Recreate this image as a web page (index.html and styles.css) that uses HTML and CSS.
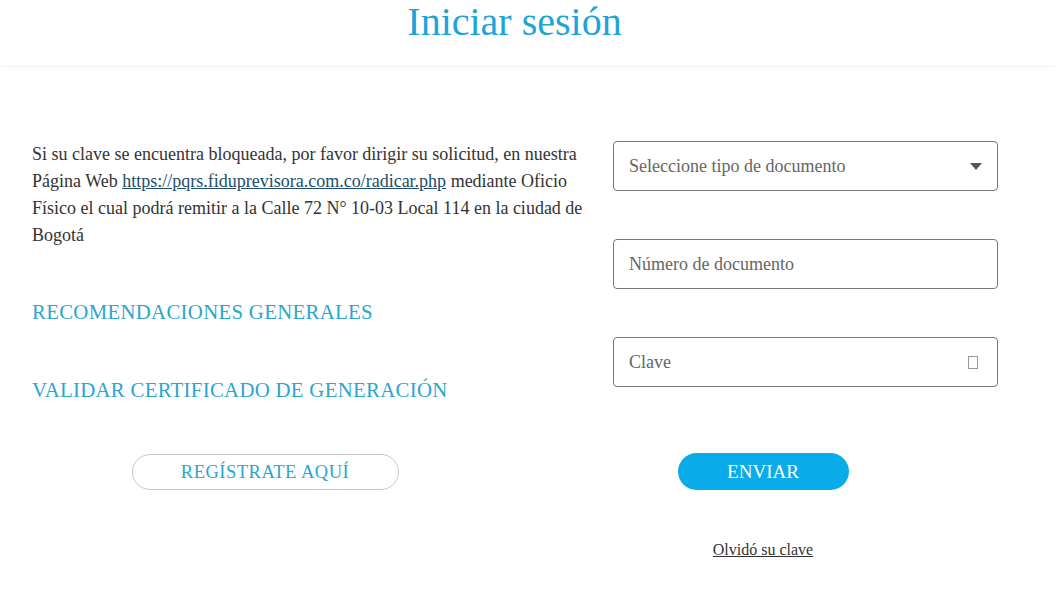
FILE: index.html
```html
<!DOCTYPE html>
<html lang="es">
<head>
<meta charset="utf-8">
<title>Iniciar sesión</title>
<link rel="stylesheet" href="styles.css">
</head>
<body>
<header class="header">
  <h1 class="title">Iniciar sesión</h1>
</header>
<main class="main">
  <section class="info">
    <p class="notice">Si su clave se encuentra bloqueada, por favor dirigir su solicitud, en nuestra Página Web <a class="link" href="#">https://pqrs.fiduprevisora.com.co/radicar.php</a> mediante Oficio Físico el cual podrá remitir a la Calle 72 N° 10-03 Local 114 en la ciudad de Bogotá</p>
    <a class="section-link first" href="#">RECOMENDACIONES GENERALES</a>
    <a class="section-link" href="#">VALIDAR CERTIFICADO DE GENERACIÓN</a>
  </section>
  <form class="form">
    <div class="field select">
      <span class="placeholder">Seleccione tipo de documento</span>
      <span class="caret"></span>
    </div>
    <div class="field">
      <span class="placeholder">Número de documento</span>
    </div>
    <div class="field">
      <span class="placeholder">Clave</span>
      <span class="tofu"></span>
    </div>
  </form>
</main>
<div class="actions">
  <div class="action-col">
    <button class="btn-outline" type="button">REGÍSTRATE AQUÍ</button>
  </div>
  <div class="action-col">
    <button class="btn-primary" type="button">ENVIAR</button>
    <a class="forgot" href="#">Olvidó su clave</a>
  </div>
</div>
</body>
</html>
```
FILE: styles.css
```css
* { box-sizing: border-box; }
html, body { margin: 0; padding: 0; background: #fff; }
body {
  font-family: "Liberation Serif", "Times New Roman", serif;
  color: #333;
  width: 1056px;
  height: 603px;
  overflow: hidden;
}
.header {
  height: 66px;
  box-shadow: 0 2px 4px rgba(0,0,0,0.03);
  border-bottom: 1px solid #f7f7f7;
  display: flex;
  justify-content: center;
  padding-right: 27px;
}
.title {
  margin: 0;
  font-weight: normal;
  font-size: 40px;
  line-height: 44px;
  color: #1ea4d8;
}
.main {
  display: grid;
  grid-template-columns: 557px 385px;
  column-gap: 24px;
  padding: 75px 0 0 32px;
}
.info { display: flex; flex-direction: column; align-items: flex-start; }
.notice {
  margin: 0;
  font-size: 18px;
  line-height: 27px;
  color: #333;
}
.link { color: #1b4e6b; }
.section-link {
  color: #2aa6cf;
  text-decoration: none;
  font-size: 20.8px;
  line-height: 24px;
  letter-spacing: 0.3px;
  margin-top: 54px;
}
.section-link.first { margin-top: 51px; }
.form { display: flex; flex-direction: column; gap: 48px; }
.field {
  height: 50px;
  border: 1px solid #777;
  border-radius: 4px;
  display: flex;
  align-items: center;
  justify-content: space-between;
  padding: 0 15px 0 15px;
}
.placeholder { font-size: 18px; color: #666; }
.caret {
  width: 0; height: 0;
  border-left: 6px solid transparent;
  border-right: 6px solid transparent;
  border-top: 7px solid #555;
}
.tofu {
  width: 10px; height: 13px;
  border: 1px solid #999;
  margin-right: 4px;
}
.actions {
  display: grid;
  grid-template-columns: 530px 466px;
  margin-top: 51px;
}
.action-col { display: flex; flex-direction: column; align-items: center; }
.btn-outline {
  width: 267px; height: 36px;
  margin-top: 1px;
  border: 1px solid #c8c8c8;
  border-radius: 18px;
  background: #fff;
  color: #2aa6cf;
  font-family: inherit;
  font-size: 18.5px;
  letter-spacing: 0.5px;
  padding: 0;
}
.btn-primary {
  width: 171px; height: 37px;
  border: none;
  border-radius: 19px;
  background: #09ace8;
  color: #fff;
  font-family: inherit;
  font-size: 19px;
  padding: 0;
}
.forgot {
  margin-top: 51px;
  font-size: 16px;
  color: #333;
}
```
